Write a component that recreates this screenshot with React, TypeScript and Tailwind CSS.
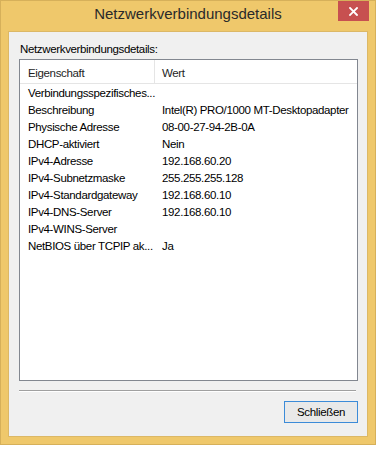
const rows: [string, string][] = [
  ["Verbindungsspezifisches...", ""],
  ["Beschreibung", "Intel(R) PRO/1000 MT-Desktopadapter"],
  ["Physische Adresse", "08-00-27-94-2B-0A"],
  ["DHCP-aktiviert", "Nein"],
  ["IPv4-Adresse", "192.168.60.20"],
  ["IPv4-Subnetzmaske", "255.255.255.128"],
  ["IPv4-Standardgateway", "192.168.60.10"],
  ["IPv4-DNS-Server", "192.168.60.10"],
  ["IPv4-WINS-Server", ""],
  ["NetBIOS über TCPIP ak...", "Ja"],
];

export default function App() {
  return (
    <div className="min-h-screen bg-white font-['Liberation_Sans',Arial,sans-serif]">
      {/* Fensterrahmen */}
      <div className="w-[376px] h-[445px] bg-[#efc86b] border border-[#d6b05a] flex flex-col">
        {/* Titelleiste */}
        <div className="h-[30px] grid grid-cols-[1fr_auto_1fr] items-start">
          <div />
          <div className="pt-[4px] text-[15px] leading-[18px] text-[#2a2a2a]">Netzwerkverbindungsdetails</div>
          <div className="flex justify-end pr-[6px]">
            <button
              type="button"
              className="w-[31px] h-[20px] bg-[#c75050] flex items-center justify-center"
            >
              <svg width="9" height="9" viewBox="0 0 9 9">
                <path d="M1 1 L8 8 M8 1 L1 8" stroke="#fff" strokeWidth="1.8" strokeLinecap="square" />
              </svg>
            </button>
          </div>
        </div>

        {/* Clientbereich */}
        <div className="flex-1 mx-[7px] mb-[7px] bg-[#f0f0f0] border border-[#dcb866] flex flex-col text-[11.5px] tracking-[-0.35px] text-black">
          <div className="pt-[10px] pl-[11px] leading-[14px]">Netzwerkverbindungsdetails:</div>

          {/* Liste */}
          <div className="mt-[3px] ml-[10px] w-[339px] h-[322px] bg-white border border-[#828790] flex flex-col">
            <div className="h-[24px] flex border-b border-[#e5e5e5]">
              <div className="w-[135px] border-r border-[#e5e5e5] pl-[8px] pt-[6px] leading-[14px] text-[#1e1e1e]">
                Eigenschaft
              </div>
              <div className="flex-1 pl-[7px] pt-[6px] leading-[14px] text-[#1e1e1e]">Wert</div>
            </div>
            <div className="mt-[1px] flex flex-col">
              {rows.map(([k, v]) => (
                <div key={k} className="h-[17px] flex leading-[17px] whitespace-nowrap">
                  <div className="w-[135px] pl-[8px]">{k}</div>
                  <div className="pl-[7px]">{v}</div>
                </div>
              ))}
            </div>
          </div>

          {/* Trennlinie */}
          <div className="mt-[9px] ml-[10px] w-[337px] h-[2px] border-t border-[#a0a0a0] border-b border-b-white" />

          {/* Schaltfläche */}
          <button
            type="button"
            className="mt-[9px] self-end mr-[9px] w-[74px] h-[22px] border border-[#3c8bd8] bg-[#e9e9e9] leading-[20px] text-center"
          >
            Schließen
          </button>
        </div>
      </div>
    </div>
  );
}
